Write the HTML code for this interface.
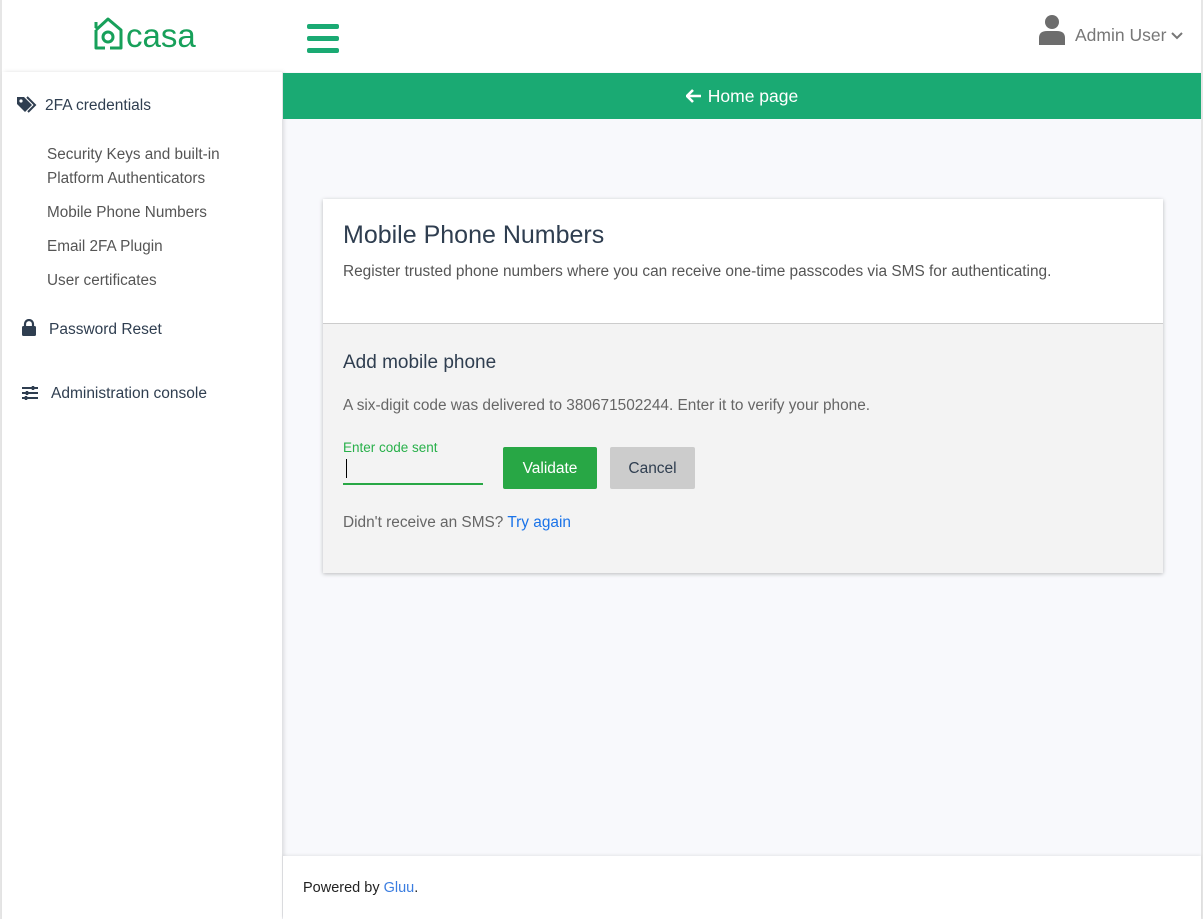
<!DOCTYPE html>
<html><head><meta charset="utf-8"><style>
*{box-sizing:border-box;margin:0;padding:0}
body{width:1203px;height:919px;overflow:hidden;font-family:"Liberation Sans",sans-serif;background:#f8f9fc;position:relative;color:#343a40}
.lb{position:absolute;left:0;top:0;width:2px;height:919px;background:#e6e6e6}
.rb{position:absolute;right:0;top:0;width:2px;height:919px;background:#e6e6e6}
.top{position:absolute;left:2px;top:0;width:1199px;height:72px;background:#fff}
.side{position:absolute;left:2px;top:72px;width:280px;height:847px;background:#fff;box-shadow:2px 0 4px rgba(0,0,0,.12)}
.side .it{position:absolute;font-size:15.5px;color:#2f3e50}
.side .sub{position:absolute;left:45px;font-size:15.3px;color:#555;line-height:24px}
.bar{position:absolute;left:283px;top:73px;width:918px;height:46px;background:#1aaa73;color:#fff;font-size:17.5px;text-align:center;line-height:46px}
.card{position:absolute;left:323px;top:199px;width:840px;height:374px;background:#fff;box-shadow:0 1px 4px rgba(0,0,0,.25)}
.lower{position:absolute;left:0;top:124px;width:840px;height:250px;background:#f3f3f3;border-top:1px solid #ccc}
.foot{position:absolute;left:283px;top:856px;width:918px;height:63px;background:#fff;box-shadow:0 -1px 3px rgba(0,0,0,.08);font-size:14.5px;color:#222;padding:24px 20px}
</style></head><body>
<div class="lb"></div><div class="rb"></div>
<div class="top">
 <svg style="position:absolute;left:90px;top:16px" width="34" height="36" viewBox="0 0 34 36"><path d="M4 14 L16 3 L29 14 V32 H18 M13 32 H4 V14" fill="none" stroke="#17a05a" stroke-width="3" stroke-linejoin="round"/><circle cx="16" cy="21" r="5" fill="none" stroke="#17a05a" stroke-width="3"/><path d="M4 6 V12" stroke="#17a05a" stroke-width="3"/></svg>
 <div style="position:absolute;left:124px;top:17px;font-size:33px;color:#17a05a">casa</div>
 <div style="position:absolute;left:305px;top:24px;width:32px;height:5px;border-radius:2px;background:#1aaa73;box-shadow:0 12px 0 #1aaa73,0 24px 0 #1aaa73"></div>
 <svg style="position:absolute;left:1036px;top:14px" width="28" height="31" viewBox="0 0 28 31"><circle cx="14" cy="8" r="7" fill="#6d6d6d"/><path d="M1 31 V24 Q1 17 9 17 H19 Q27 17 27 24 V31Z" fill="#6d6d6d"/></svg>
 <div style="position:absolute;left:1073px;top:25px;font-size:17.5px;color:#777">Admin User</div>
 <svg style="position:absolute;left:1169px;top:32px" width="12" height="8"><path d="M1 1 L6 6 L11 1" fill="none" stroke="#777" stroke-width="2"/></svg>
</div>
<div class="side">
 <svg style="position:absolute;left:15px;top:24px" width="22" height="18" viewBox="0 0 22 18"><path d="M0 1 V8 L8 16 L15 9 L7 1Z" fill="#2f3e50"/><circle cx="4" cy="5" r="1.6" fill="#fff"/><path d="M10 1 L18 9 L11 16" fill="none" stroke="#2f3e50" stroke-width="2"/></svg>
 <div class="it" style="left:43px;top:25px">2FA credentials</div>
 <div class="sub" style="top:71px">Security Keys and built-in<br>Platform Authenticators</div>
 <div class="sub" style="top:129px">Mobile Phone Numbers</div>
 <div class="sub" style="top:163px">Email 2FA Plugin</div>
 <div class="sub" style="top:197px">User certificates</div>
 <svg style="position:absolute;left:20px;top:247px" width="14" height="17" viewBox="0 0 14 17"><path d="M3 7 V5 A4 4 0 0 1 11 5 V7" fill="none" stroke="#2f3e50" stroke-width="2.2"/><rect x="0" y="7" width="14" height="10" rx="1.5" fill="#2f3e50"/></svg>
 <div class="it" style="left:47px;top:249px">Password Reset</div>
 <svg style="position:absolute;left:20px;top:314px" width="16" height="14"><g stroke="#2f3e50" stroke-width="2"><path d="M0 2H16M0 7H16M0 12H16"/><path d="M11 0V4M5 5V9M4 10V14" stroke-width="2.5"/></g></svg>
 <div class="it" style="left:49px;top:313px">Administration console</div>
</div>
<div class="bar"><svg width="16" height="14" viewBox="0 0 16 14" style="vertical-align:-1px;margin-right:6px"><path d="M15 7H2M7 1L1 7L7 13" fill="none" stroke="#fff" stroke-width="2.6"/></svg>Home page</div>
<div class="card">
 <div style="position:absolute;left:20px;top:22px;font-size:25px;color:#2f3e50">Mobile Phone Numbers</div>
 <div style="position:absolute;left:20px;top:64px;font-size:15.4px;color:#555">Register trusted phone numbers where you can receive one-time passcodes via SMS for authenticating.</div>
 <div class="lower">
  <div style="position:absolute;left:20px;top:28px;font-size:19px;color:#2f3e50">Add mobile phone</div>
  <div style="position:absolute;left:20px;top:73px;font-size:15.4px;color:#666">A six-digit code was delivered to 380671502244. Enter it to verify your phone.</div>
  <div style="position:absolute;left:20px;top:116px;font-size:13.5px;color:#28b04a">Enter code sent</div>
  <div style="position:absolute;left:23px;top:135px;width:1px;height:19px;background:#000"></div>
  <div style="position:absolute;left:20px;top:159px;width:140px;height:2px;background:#28a745"></div>
  <div style="position:absolute;left:180px;top:123px;width:94px;height:42px;background:#28a745;border-radius:2px;color:#fff;font-size:15.5px;text-align:center;line-height:44px">Validate</div>
  <div style="position:absolute;left:287px;top:123px;width:85px;height:42px;background:#ccc;border-radius:2px;color:#2f3e50;font-size:15.5px;text-align:center;line-height:44px">Cancel</div>
  <div style="position:absolute;left:20px;top:190px;font-size:15.4px;color:#666">Didn't receive an SMS? <span style="color:#1a73e8">Try again</span></div>
 </div>
</div>
<div class="foot">Powered by <span style="color:#3b7de0">Gluu</span>.</div>
</body></html>
